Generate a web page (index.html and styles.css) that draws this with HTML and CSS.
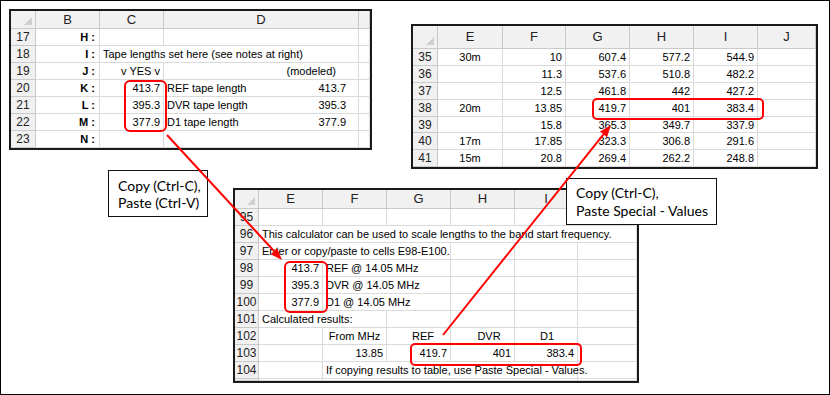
FILE: index.html
```html
<!DOCTYPE html>
<html>
<head>
<meta charset="utf-8">
<link rel="stylesheet" href="styles.css">
</head>
<body>
<div class="canvas">

  <div class="sheet sheet-a">
    <div class="h corner"><span class="tri"></span></div><div class="h">B</div><div class="h">C</div><div class="h">D</div><div class="h"></div>
    <div class="rn">17</div><div class="c r b">H :</div><div class="c"></div><div class="c"></div><div class="c"></div>
    <div class="rn">18</div><div class="c r b">I :</div><div class="c s2">Tape lengths set here (see notes at right)</div><div class="c"></div>
    <div class="rn">19</div><div class="c r b">J :</div><div class="c r">v YES v</div><div class="c r pad-mod">(modeled)</div><div class="c"></div>
    <div class="rn">20</div><div class="c r b">K :</div><div class="c r">413.7</div><div class="c split"><span>REF tape length</span><span>413.7</span></div><div class="c"></div>
    <div class="rn">21</div><div class="c r b">L :</div><div class="c r">395.3</div><div class="c split"><span>DVR tape length</span><span>395.3</span></div><div class="c"></div>
    <div class="rn">22</div><div class="c r b">M :</div><div class="c r">377.9</div><div class="c split"><span>D1 tape length</span><span>377.9</span></div><div class="c"></div>
    <div class="rn">23</div><div class="c r b">N :</div><div class="c"></div><div class="c"></div><div class="c"></div>
  </div>

  <div class="sheet sheet-b">
    <div class="h corner"><span class="tri"></span></div><div class="h">E</div><div class="h">F</div><div class="h">G</div><div class="h">H</div><div class="h">I</div><div class="h">J</div>
    <div class="rn">35</div><div class="c ctr">30m</div><div class="c r">10</div><div class="c r">607.4</div><div class="c r">577.2</div><div class="c r">544.9</div><div class="c"></div>
    <div class="rn">36</div><div class="c"></div><div class="c r">11.3</div><div class="c r">537.6</div><div class="c r">510.8</div><div class="c r">482.2</div><div class="c"></div>
    <div class="rn">37</div><div class="c"></div><div class="c r">12.5</div><div class="c r">461.8</div><div class="c r">442</div><div class="c r">427.2</div><div class="c"></div>
    <div class="rn">38</div><div class="c ctr">20m</div><div class="c r">13.85</div><div class="c r">419.7</div><div class="c r">401</div><div class="c r">383.4</div><div class="c"></div>
    <div class="rn">39</div><div class="c"></div><div class="c r">15.8</div><div class="c r">365.3</div><div class="c r">349.7</div><div class="c r">337.9</div><div class="c"></div>
    <div class="rn">40</div><div class="c ctr">17m</div><div class="c r">17.85</div><div class="c r">323.3</div><div class="c r">306.8</div><div class="c r">291.6</div><div class="c"></div>
    <div class="rn">41</div><div class="c ctr">15m</div><div class="c r">20.8</div><div class="c r">269.4</div><div class="c r">262.2</div><div class="c r">248.8</div><div class="c"></div>
  </div>

  <div class="sheet sheet-c">
    <div class="h corner"><span class="tri"></span></div><div class="h">E</div><div class="h">F</div><div class="h">G</div><div class="h">H</div><div class="h">I</div><div class="h">J</div>
    <div class="rn">95</div><div class="c"></div><div class="c"></div><div class="c"></div><div class="c"></div><div class="c"></div><div class="c"></div>
    <div class="rn">96</div><div class="c s6">This calculator can be used to scale lengths to the band start frequency.</div>
    <div class="rn">97</div><div class="c s3">Enter or copy/paste to cells E98-E100.</div><div class="c"></div><div class="c"></div><div class="c"></div>
    <div class="rn">98</div><div class="c r">413.7</div><div class="c s2">REF @ 14.05 MHz</div><div class="c"></div><div class="c"></div><div class="c"></div>
    <div class="rn">99</div><div class="c r">395.3</div><div class="c s2">DVR @ 14.05 MHz</div><div class="c"></div><div class="c"></div><div class="c"></div>
    <div class="rn">100</div><div class="c r">377.9</div><div class="c s2">D1 @ 14.05 MHz</div><div class="c"></div><div class="c"></div><div class="c"></div>
    <div class="rn">101</div><div class="c s2">Calculated results:</div><div class="c"></div><div class="c"></div><div class="c"></div><div class="c"></div>
    <div class="rn">102</div><div class="c"></div><div class="c ctr">From MHz</div><div class="c ctr off-ref">REF</div><div class="c ctr off-dvr">DVR</div><div class="c ctr off-d1">D1</div><div class="c"></div>
    <div class="rn">103</div><div class="c"></div><div class="c r">13.85</div><div class="c r">419.7</div><div class="c r">401</div><div class="c r">383.4</div><div class="c"></div>
    <div class="rn">104</div><div class="c"></div><div class="c s4">If copying results to table, use Paste Special - Values.</div><div class="c"></div>
    <div class="rn"></div><div class="c"></div><div class="c"></div><div class="c"></div><div class="c"></div><div class="c"></div><div class="c"></div>
  </div>

  <div class="callout callout-a">
    <div>Copy (Ctrl-C),</div>
    <div>Paste (Ctrl-V)</div>
  </div>

  <div class="callout callout-b">
    <div>Copy (Ctrl-C),</div>
    <div>Paste Special - Values</div>
  </div>

  <svg class="overlay" width="830" height="395" viewBox="0 0 830 395">
    <g fill="none" stroke="#ff0000" stroke-width="2">
      <rect x="125" y="81" width="41" height="50" rx="5"/>
      <rect x="593" y="99" width="170" height="20" rx="4"/>
      <rect x="285" y="262" width="42" height="50" rx="5"/>
      <rect x="411" y="344" width="170" height="21" rx="4"/>
      <line x1="167" y1="135" x2="274" y2="251"/>
      <line x1="443" y1="335" x2="603.5" y2="134.4"/>
    </g>
    <g fill="#ff0000">
      <polygon points="282,260 270.6,254.2 277.2,248.2"/>
      <polygon points="611,125 607,137.2 600,131.6"/>
    </g>
  </svg>
</div>
</body>
</html>
```

FILE: styles.css
```css
html, body {
  margin: 0;
  padding: 0;
  background: #ffffff;
}

.canvas {
  position: relative;
  width: 830px;
  height: 395px;
  box-sizing: border-box;
  border: 1px solid #000;
  background: #fff;
  overflow: hidden;
  font-family: "Liberation Sans", Arial, sans-serif;
}

.sheet {
  position: absolute;
  display: grid;
  border: 2px solid #1a1a1a;
  background: #fff;
  overflow: hidden;
  font-size: 11px;
  color: #000;
}

.sheet-a {
  left: 8px;
  top: 8px;
  grid-template-columns: 25px 64px 64px 195px 11px;
  grid-template-rows: 18px repeat(7, 17px);
}

.sheet-b {
  left: 410px;
  top: 23px;
  grid-template-columns: 25px 65px 63px 64px 64px 64px 58px;
  grid-template-rows: 23px 17px 17px 17px 17px 16px 17px 17px;
}

.sheet-c {
  left: 232px;
  top: 187px;
  grid-template-columns: 24px 64px 64px 64px 64px 63px 59px;
  grid-template-rows: 19px repeat(10, 17px) 2px;
}

.h {
  box-sizing: border-box;
  background: #f1f1f1;
  border-right: 1px solid #c9c9c9;
  border-bottom: 1px solid #c9c9c9;
  text-align: center;
  font-size: 13px;
  line-height: 18px;
  color: #222;
}

.sheet-b .h {
  line-height: 22px;
}

.corner {
  position: relative;
}

.tri {
  position: absolute;
  right: 3px;
  bottom: 3px;
  width: 0;
  height: 0;
  border-left: 8px solid transparent;
  border-bottom: 8px solid #cfcfcf;
}

.rn {
  box-sizing: border-box;
  background: #f1f1f1;
  border-right: 1px solid #c9c9c9;
  border-bottom: 1px solid #c9c9c9;
  text-align: center;
  font-size: 12px;
  line-height: 16px;
  color: #222;
  overflow: hidden;
}

.c {
  box-sizing: border-box;
  border-right: 1px solid #dadada;
  border-bottom: 1px solid #dadada;
  padding: 1px 3px 0 3px;
  line-height: 15px;
  white-space: nowrap;
}

.r { text-align: right; }
.ctr { text-align: center; }
.b { font-weight: bold; padding-right: 4px; }

.s2 { grid-column: span 2; }
.s3 { grid-column: span 3; }
.s4 { grid-column: span 4; }
.s6 { grid-column: span 6; }

.split {
  display: flex;
  justify-content: space-between;
  padding-right: 12px;
}

.pad-mod { padding-right: 22px; }

.off-ref { padding-left: 12px; }
.off-dvr { padding-left: 16px; }
.off-d1 { padding-left: 5px; }

.callout {
  position: absolute;
  box-sizing: border-box;
  display: flex;
  flex-direction: column;
  justify-content: center;
  background: #fff;
  border: 1px solid #111;
  padding-left: 9px;
  font-family: Lato, "Open Sans", sans-serif;
  font-size: 14px;
  line-height: 17px;
  color: #000;
}

.callout-a {
  left: 107px;
  top: 169px;
  width: 100px;
  height: 47px;
}

.callout-b {
  left: 565px;
  top: 177px;
  width: 151px;
  height: 47px;
  line-height: 18px;
}

.overlay {
  position: absolute;
  left: -1px;
  top: -1px;
}
```
